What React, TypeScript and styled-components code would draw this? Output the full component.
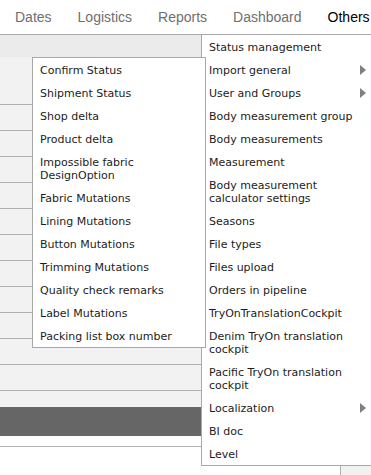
import React from "react";
import styled, { createGlobalStyle } from "styled-components";

const Global = createGlobalStyle`
  html, body { margin: 0; padding: 0; background: #ffffff; overflow: hidden; }
  body { font-family: "Liberation Sans", Arial, sans-serif; }
`;

const Page = styled.div`
  position: relative;
  width: 371px;
  height: 475px;
  overflow: hidden;
  background: #ffffff;
`;

const Nav = styled.nav`
  box-sizing: border-box;
  height: 35px;
  display: flex;
  align-items: center;
  padding-left: 2px;
  border-bottom: 1px solid #aaaaaa;
  background: #ffffff;
`;

const Tab = styled.span<{ $active?: boolean }>`
  padding: 0 13px;
  font-size: 14px;
  line-height: 34px;
  color: ${(p) => (p.$active ? "#000000" : "#6f6f6f")};
  white-space: nowrap;
`;

const Body = styled.div`
  display: grid;
  grid-template-columns: 201px 1fr;
`;

const LeftPanel = styled.div`
  display: flex;
  flex-direction: column;
`;

const HeaderBand = styled.div`
  height: 22px;
  background: #ebebeb;
`;

const Row = styled.div<{ $h: number; $bg?: string; $line?: boolean }>`
  box-sizing: border-box;
  height: ${(p) => p.$h}px;
  background: ${(p) => p.$bg ?? "#f2f2f2"};
  border-bottom: ${(p) => (p.$line ? "1px solid #b0b0b0" : "none")};
`;

const RightPanel = styled.div`
  display: flex;
  flex-direction: column;
`;

const Filler = styled.div`
  height: 409px;
  background: #ffffff;
`;

const BottomRow = styled.div`
  display: flex;
  height: 20px;
`;

const BlankCell = styled.div`
  width: 139px;
  background: #ffffff;
`;

const GrayCell = styled.div`
  flex: 1;
  background: #f1f1f1;
  border-left: 1px solid #b0b0b0;
`;

const Menu = styled.ul`
  position: absolute;
  left: 201px;
  top: 34px;
  box-sizing: border-box;
  width: 175px;
  margin: 0;
  padding: 0;
  list-style: none;
  background: #ffffff;
  border: 1px solid #a8a8a8;
  font-family: "DejaVu Sans", Verdana, sans-serif;
  font-size: 11px;
  color: #1c1c1c;
`;

const Item = styled.li<{ $anchor?: boolean }>`
  position: ${(p) => (p.$anchor ? "relative" : "static")};
  display: flex;
  align-items: center;
  padding: 6px 9px 4px 7px;
  line-height: 13px;
`;

const Label = styled.span`
  flex: 1;
  min-width: 0;
`;

const Arrow = styled.span`
  flex: none;
  width: 0;
  height: 0;
  margin-left: 4px;
  margin-top: -1px;
  border-left: 6px solid #808080;
  border-top: 5px solid transparent;
  border-bottom: 5px solid transparent;
`;

const SubMenu = styled.ul`
  position: absolute;
  top: -1px;
  left: -170px;
  box-sizing: border-box;
  width: 174px;
  margin: 0;
  padding: 0;
  list-style: none;
  background: #ffffff;
  border: 1px solid #a8a8a8;
  z-index: 2;
`;

const SubItem = styled.li`
  padding: 6px 20px 4px 7px;
  line-height: 13px;
`;

const tabs = ["Dates", "Logistics", "Reports", "Dashboard", "Others"];

const subItems = [
  "Confirm Status",
  "Shipment Status",
  "Shop delta",
  "Product delta",
  "Impossible fabric DesignOption",
  "Fabric Mutations",
  "Lining Mutations",
  "Button Mutations",
  "Trimming Mutations",
  "Quality check remarks",
  "Label Mutations",
  "Packing list box number",
];

const menuItems: { label: string; arrow?: boolean; sub?: boolean }[] = [
  { label: "Status management" },
  { label: "Import general", arrow: true, sub: true },
  { label: "User and Groups", arrow: true },
  { label: "Body measurement group" },
  { label: "Body measurements" },
  { label: "Measurement" },
  { label: "Body measurement calculator settings" },
  { label: "Seasons" },
  { label: "File types" },
  { label: "Files upload" },
  { label: "Orders in pipeline" },
  { label: "TryOnTranslationCockpit" },
  { label: "Denim TryOn translation cockpit" },
  { label: "Pacific TryOn translation cockpit" },
  { label: "Localization", arrow: true },
  { label: "BI doc" },
  { label: "Level" },
];

export default function App() {
  return (
    <Page>
      <Global />
      <Nav>
        {tabs.map((t) => (
          <Tab key={t} $active={t === "Others"}>
            {t}
          </Tab>
        ))}
      </Nav>
      <Body>
        <LeftPanel>
          <HeaderBand />
          <Row $h={48} $line />
          {Array.from({ length: 11 }).map((_, i) => (
            <Row key={i} $h={26} $line />
          ))}
          <Row $h={16} />
          <Row $h={29} $bg="#666666" />
          <Row $h={11} $bg="#ffffff" $line />
          <Row $h={30} $bg="#ffffff" />
        </LeftPanel>
        <RightPanel>
          <HeaderBand />
          <Filler />
          <BottomRow>
            <BlankCell />
            <GrayCell />
          </BottomRow>
        </RightPanel>
      </Body>
      <Menu>
        {menuItems.map((m) => (
          <Item key={m.label} $anchor={m.sub}>
            <Label>{m.label}</Label>
            {m.arrow && <Arrow />}
            {m.sub && (
              <SubMenu>
                {subItems.map((s) => (
                  <SubItem key={s}>{s}</SubItem>
                ))}
              </SubMenu>
            )}
          </Item>
        ))}
      </Menu>
    </Page>
  );
}
